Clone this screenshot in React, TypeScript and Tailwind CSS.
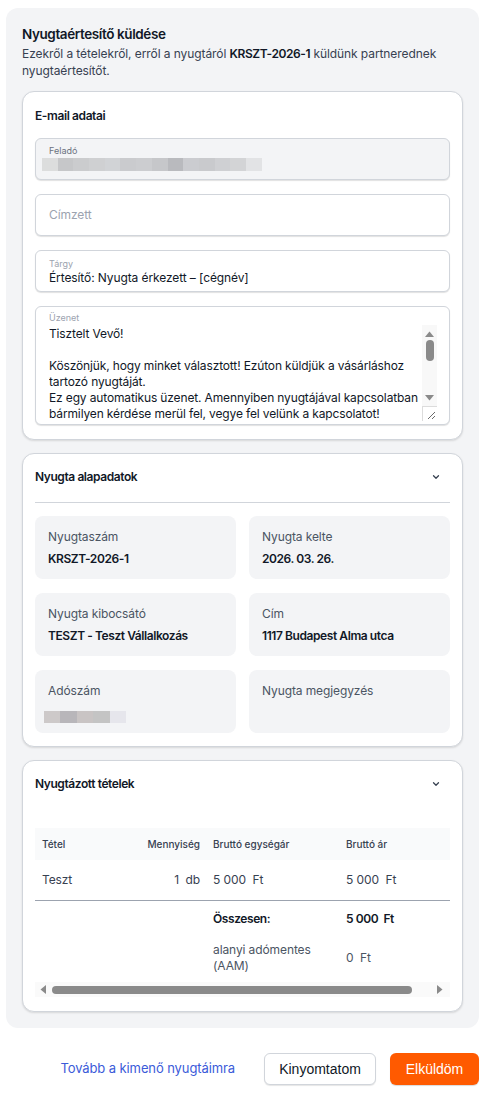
import React from "react";

const feladoBlocks = ["#dcdddd", "#c6c7c9", "#cbccce", "#cfd0d2", "#d1d3d6", "#cacbce", "#cccdd0", "#c6c7ca", "#b9babe", "#cbccd0", "#c9cacd", "#cfd0d3", "#d3d4d6", "#e2e3e5"];
const adoBlocks = ["#cdc9c9", "#b8b6ba", "#c9c4c4", "#c4c4c4", "#e6e6ec"];

const message = `Tisztelt Vevő!

Köszönjük, hogy minket választott! Ezúton küldjük a vásárláshoz tartozó nyugtáját.
Ez egy automatikus üzenet. Amennyiben nyugtájával kapcsolatban bármilyen kérdése merül fel, vegye fel velünk a kapcsolatot!

Üdvözlettel:
[cégnév]`;

function Chevron() {
  return (
    <svg width="10" height="10" viewBox="0 0 24 24" fill="none" stroke="#374151" strokeWidth="3" strokeLinecap="round" strokeLinejoin="round">
      <path d="M6 9l6 6 6-6" />
    </svg>
  );
}

function InfoCell({ label, value, blur }: { label: string; value?: string; blur?: boolean }) {
  return (
    <div className="h-[63px] rounded-lg bg-[#f3f4f6] pl-[13px] pt-[13px]">
      <div className="text-[12px] leading-[16px] tracking-[-0.1px] text-[#4b5563]">{label}</div>
      {value && <div className="mt-[6px] text-[12px] leading-[16px] font-semibold tracking-[-0.42px] text-[#111827]">{value}</div>}
      {blur && (
        <div className="mt-[12px] -ml-[4px] flex h-[12px]">
          {adoBlocks.map((c, i) => (
            <div key={i} className="h-full w-[16.4px]" style={{ background: c }} />
          ))}
        </div>
      )}
    </div>
  );
}

function VScrollbar() {
  return (
    <div className="flex h-full w-[15px] shrink-0 flex-col">
      <div className="flex flex-1 flex-col items-center bg-[#f8f8f8] pt-[6px]">
        <svg width="9" height="6" viewBox="0 0 9 6"><path d="M0 6L4.5 0.5L9 6Z" fill="#8a8a8a" /></svg>
        <div className="mt-[3px] h-[21px] w-[8px] rounded-[4px] bg-[#8a8a8a]" />
        <div className="flex-1" />
        <svg width="9" height="6" viewBox="0 0 9 6" className="mb-[5px]"><path d="M0 0L4.5 5.5L9 0Z" fill="#8a8a8a" /></svg>
      </div>
      <div className="relative h-[15px] w-[15px] border-l border-t border-[#dcdcdc] bg-white">
        <svg width="14" height="14" viewBox="0 0 14 14" className="absolute left-0 top-0">
          <path d="M5 12L12 5M9 12L12 9" stroke="#6b6b6b" strokeWidth="1" />
        </svg>
      </div>
    </div>
  );
}

function HScrollbar() {
  return (
    <div className="flex h-[15px] items-center bg-[#fafafa] px-[5px]">
      <svg width="6" height="9" viewBox="0 0 6 9"><path d="M6 0L0.5 4.5L6 9Z" fill="#8a8a8a" /></svg>
      <div className="ml-[6px] h-[8px] w-[360px] rounded-[4px] bg-[#8a8a8a]" />
      <div className="flex-1" />
      <svg width="6" height="9" viewBox="0 0 6 9" className="mr-[2px]"><path d="M0 0L5.5 4.5L0 9Z" fill="#8a8a8a" /></svg>
    </div>
  );
}

export default function App() {
  return (
    <div className="min-h-[1099px] bg-white font-[Inter,sans-serif] text-[#111827]">
      <div className="pt-[8px]">
        <div className="ml-[6px] w-[473px] rounded-[12px] bg-[#f3f4f6] px-[16px] pt-[16px] pb-[16px]">
          <h1 className="text-[13.5px] leading-[20px] font-semibold tracking-[-0.4px] text-[#111827]">Nyugtaértesítő küldése</h1>
          <p className="mt-[1px] text-[12px] leading-[17px] tracking-[-0.08px] text-[#374151]">
            Ezekről a tételekről, erről a nyugtáról <span className="font-semibold tracking-[-0.42px] text-[#111827]">KRSZT-2026-1</span> küldünk partnerednek nyugtaértesítőt.
          </p>

          {/* E-mail adatai */}
          <div className="mt-[12px] rounded-[12px] border border-[#d1d5db] bg-white px-[12px] pt-[16px] pb-[14px] shadow-[0_1px_2px_rgba(0,0,0,0.12)]">
            <div className="text-[12px] leading-[16px] font-semibold tracking-[-0.4px]">E-mail adatai</div>
            <div className="mt-[14px] flex flex-col gap-[14px]">
              <div className="h-[42px] rounded-[6px] border border-[#d1d5db] bg-[#f3f4f6] pl-[13px] pt-[6px] shadow-[0_1px_1px_rgba(0,0,0,0.12)]">
                <div className="text-[9px] leading-[12px] text-[#6b7280]">Feladó</div>
                <div className="mt-[1px] -ml-[7px] flex h-[13px]">
                  {feladoBlocks.map((c, i) => (
                    <div key={i} className="h-full w-[15.7px]" style={{ background: c }} />
                  ))}
                </div>
              </div>
              <div className="flex h-[42px] items-center rounded-[6px] border border-[#d1d5db] bg-white pl-[13px] shadow-[0_1px_1px_rgba(0,0,0,0.12)]">
                <span className="text-[12px] tracking-[-0.1px] text-[#9ca3af]">Címzett</span>
              </div>
              <div className="h-[42px] rounded-[6px] border border-[#d1d5db] bg-white pl-[13px] pt-[7px] shadow-[0_1px_1px_rgba(0,0,0,0.12)]">
                <div className="text-[9px] leading-[12px] text-[#9ca3af]">Tárgy</div>
                <div className="text-[12px] leading-[16px] tracking-[-0.1px] text-[#111827]">Értesítő: Nyugta érkezett – [cégnév]</div>
              </div>
              <div className="h-[119px] rounded-[6px] border border-[#d1d5db] bg-white pl-[13px] pr-[12px] pt-[5px] shadow-[0_1px_1px_rgba(0,0,0,0.12)]">
                <div className="text-[9px] leading-[12px] text-[#9ca3af]">Üzenet</div>
                <div className="mt-[1px] flex h-[96px]">
                  <div className="h-full flex-1 overflow-hidden whitespace-pre-wrap pt-[1px] text-[12px] leading-[16px] tracking-[-0.14px] text-[#111827]">
                    {message}
                  </div>
                  <VScrollbar />
                </div>
              </div>
            </div>
          </div>

          {/* Nyugta alapadatok */}
          <div className="mt-[13px] rounded-[12px] border border-[#d1d5db] bg-white px-[12px] pt-[15px] pb-[13px] shadow-[0_1px_2px_rgba(0,0,0,0.12)]">
            <div className="flex items-center justify-between pr-[9px]">
              <div className="text-[12px] leading-[16px] font-semibold tracking-[-0.42px]">Nyugta alapadatok</div>
              <Chevron />
            </div>
            <div className="mt-[17px] border-t border-[#d1d5db]" />
            <div className="mt-[13px] grid grid-cols-2 gap-x-[13px] gap-y-[14px]">
              <InfoCell label="Nyugtaszám" value="KRSZT-2026-1" />
              <InfoCell label="Nyugta kelte" value="2026. 03. 26." />
              <InfoCell label="Nyugta kibocsátó" value="TESZT - Teszt Vállalkozás" />
              <InfoCell label="Cím" value="1117 Budapest Alma utca" />
              <InfoCell label="Adószám" blur />
              <InfoCell label="Nyugta megjegyzés" />
            </div>
          </div>

          {/* Nyugtázott tételek */}
          <div className="mt-[13px] rounded-[12px] border border-[#d1d5db] bg-white px-[12px] pt-[15px] pb-[14px] shadow-[0_1px_2px_rgba(0,0,0,0.12)]">
            <div className="flex items-center justify-between pr-[9px]">
              <div className="text-[12px] leading-[16px] font-semibold tracking-[-0.42px]">Nyugtázott tételek</div>
              <Chevron />
            </div>
            <div className="mt-[36px] overflow-hidden">
              <div className="w-[455px]">
                <div className="flex h-[32px] items-center bg-[#f9fafb] text-[10px] font-medium text-[#374151]">
                  <div className="w-[100px] pl-[7px]">Tétel</div>
                  <div className="w-[71px] pr-[6px] text-right">Mennyiség</div>
                  <div className="w-[134px] pl-[7px]">Bruttó egységár</div>
                  <div className="w-[150px] pl-[6px]">Bruttó ár</div>
                </div>
                <div className="flex h-[41px] items-center border-b border-[#9ca3af] text-[12px] tracking-[-0.1px] text-[#374151]">
                  <div className="w-[100px] pl-[7px]">Teszt</div>
                  <div className="w-[71px] pr-[6px] text-right">1&nbsp; db</div>
                  <div className="w-[134px] pl-[7px]">5 000&nbsp; Ft</div>
                  <div className="w-[150px] pl-[6px]">5 000&nbsp; Ft</div>
                </div>
                <div className="flex h-[35px] items-center text-[12px] font-semibold tracking-[-0.42px] text-[#111827]">
                  <div className="w-[171px]" />
                  <div className="w-[134px] pl-[7px]">Összesen:</div>
                  <div className="w-[150px] pl-[6px]">5 000&nbsp; Ft</div>
                </div>
                <div className="flex h-[44px] items-center text-[12px] tracking-[-0.1px] text-[#4b5563]">
                  <div className="w-[171px]" />
                  <div className="w-[134px] pl-[7px] leading-[16px]">alanyi adómentes<br />(AAM)</div>
                  <div className="w-[150px] pl-[6px]">0&nbsp; Ft</div>
                </div>
              </div>
            </div>
            <div className="mt-[2px]">
              <HScrollbar />
            </div>
          </div>
        </div>

        {/* Footer buttons */}
        <div className="mt-[25px] ml-[6px] flex w-[473px] items-center justify-end">
          <a className="mr-[29px] text-[13px] tracking-[-0.1px] text-[#3b5bd9] font-[Inter,sans-serif]" href="#">Tovább a kimenő nyugtáimra</a>
          <button className="h-[32px] w-[112px] rounded-[6px] border border-[#d1d5db] bg-white text-[14px] text-[#111827] shadow-[0_1px_1px_rgba(0,0,0,0.1)] font-['Liberation_Sans',Arial,sans-serif]">Kinyomtatom</button>
          <button className="ml-[14px] h-[32px] w-[89px] rounded-[6px] bg-[#ff5a00] text-[14px] text-white shadow-[0_1px_1px_rgba(0,0,0,0.15)] font-['Liberation_Sans',Arial,sans-serif]">Elküldöm</button>
        </div>
      </div>
    </div>
  );
}
